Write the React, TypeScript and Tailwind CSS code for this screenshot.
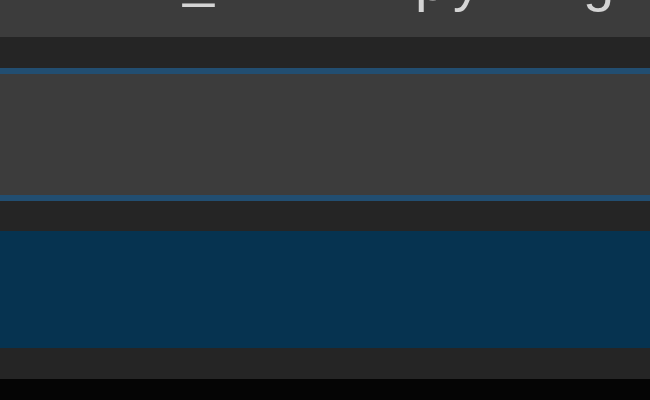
import React from "react";

const glyphs: { ch: string; w: string; extra?: string }[] = [
  { ch: "l", w: "w-[33px]" },
  { ch: "l", w: "w-[40px]" },
  { ch: "l", w: "w-[61px]" },
  { ch: "_", w: "w-[46px]", extra: "-translate-y-[4px]" },
  { ch: "l", w: "w-[32px]" },
  { ch: "l", w: "w-[75px]" },
  { ch: "l", w: "w-[38px]" },
  { ch: "l", w: "w-[41px]" },
  { ch: "p", w: "w-[38px]" },
  { ch: "y", w: "w-[130px]" },
  { ch: "g", w: "w-[50px]" },
  { ch: "l", w: "w-[17px]" },
];

export default function App() {
  return (
    <div className="w-[650px] h-[400px] flex flex-col overflow-hidden bg-[#050505]">
      <div className="h-[37px] shrink-0 bg-[#3c3c3c] overflow-hidden">
        <div
          className="flex pl-[49px] mt-[-47px] text-[56px] leading-none text-[#d4d4d4] whitespace-nowrap"
          style={{ fontFamily: '"Liberation Sans", Arial, sans-serif' }}
        >
          {glyphs.map((g, i) => (
            <span key={i} className={`inline-block shrink-0 ${g.w} ${g.extra ?? ""}`}>
              {g.ch}
            </span>
          ))}
        </div>
      </div>
      <div className="h-[31px] shrink-0 bg-[#252525]" />
      <div className="h-[6px] shrink-0 bg-[#224e71]" />
      <div className="h-[121px] shrink-0 bg-[#3c3c3c]" />
      <div className="h-[6px] shrink-0 bg-[#224e71]" />
      <div className="h-[30px] shrink-0 bg-[#252525]" />
      <div className="h-[117px] shrink-0 bg-[#063350]" />
      <div className="h-[31px] shrink-0 bg-[#252525]" />
      <div className="flex-1 bg-[#050505]" />
    </div>
  );
}
